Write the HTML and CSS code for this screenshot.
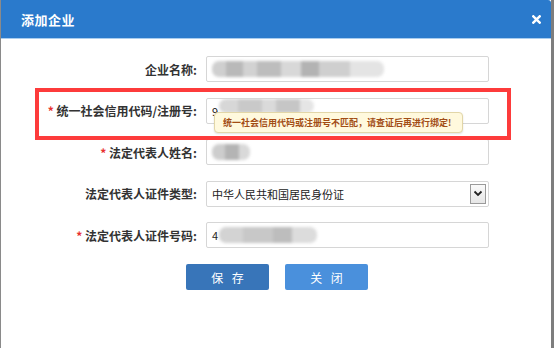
FILE: index.html
```html
<!DOCTYPE html>
<html lang="zh-CN">
<head>
<meta charset="utf-8">
<title>添加企业</title>
<link rel="stylesheet" href="styles.css">
</head>
<body>
<div class="dialog">
  <div class="header">
    <span class="title">添加企业</span>
    <svg class="close" width="9" height="9" viewBox="0 0 9 9"><path d="M1.3 1.3 L7.7 7.7 M7.7 1.3 L1.3 7.7" stroke="#fff" stroke-width="2.4" stroke-linecap="square"/></svg>
  </div>
  <div class="body">
    <div class="form">
      <label class="label">企业名称:</label>
      <div class="field"><span class="blur b1"></span></div>

      <label class="label"><span class="req">*</span> 统一社会信用代码/注册号:</label>
      <div class="field"><span class="val">9</span><span class="blur b2"></span></div>

      <label class="label"><span class="req">*</span> 法定代表人姓名:</label>
      <div class="field"><span class="blur b3"></span></div>

      <label class="label">法定代表人证件类型:</label>
      <div class="field select"><span class="val">中华人民共和国居民身份证</span>
        <span class="arrow"><svg width="10" height="7" viewBox="0 0 10 7"><path d="M1.5 1.5 L5 5 L8.5 1.5" fill="none" stroke="#222" stroke-width="1.8"/></svg></span>
      </div>

      <label class="label"><span class="req">*</span> 法定代表人证件号码:</label>
      <div class="field"><span class="val">4</span><span class="blur b5"></span></div>
    </div>
    <div class="actions">
      <button class="btn save">保 存</button>
      <button class="btn cancel">关 闭</button>
    </div>
  </div>
  <div class="highlight"></div>
  <div class="tip">统一社会信用代码或注册号不匹配，请查证后再进行绑定!</div>
</div>
</body>
</html>
```
FILE: styles.css
```css
* { box-sizing: border-box; }
html, body { margin: 0; padding: 0; background: #fff; }
body {
  width: 554px;
  height: 348px;
  overflow: hidden;
  font-family: "Noto Sans CJK SC", "Liberation Sans", sans-serif;
}
.dialog {
  position: relative;
  width: 554px;
  height: 348px;
  border-left: 1px solid #8a8a8a;
  border-right: 3px solid #7e7e7e;
  background: #fff;
}
.header {
  height: 39px;
  background: #2a7acc;
  border-bottom: 1px solid #a9cdef;
  border-top-right-radius: 3px;
  display: flex;
  align-items: center;
  justify-content: space-between;
  padding: 0 10px 0 20px;
  color: #fff;
}
.title {
  font-size: 13px;
  font-weight: bold;
  letter-spacing: 0.5px;
}
.close {
  display: block;
  margin-top: 1px;
}
.body {
  padding-top: 17px;
}
.form {
  display: grid;
  grid-template-columns: 196px 283px;
  column-gap: 9px;
  row-gap: 15.5px;
}
.label {
  font-size: 12px;
  font-weight: bold;
  color: #333;
  text-align: right;
  align-self: center;
  white-space: nowrap;
}
.req { color: #e8312f; font-weight: bold; }
.field {
  height: 26px;
  border: 1px solid #d6d6d6;
  border-radius: 2px;
  display: flex;
  align-items: center;
  padding-left: 5px;
  font-size: 11px;
  color: #222;
  overflow: hidden;
}
.val { white-space: nowrap; }
.blur {
  display: block;
  height: 16px;
  border-radius: 7px;
  filter: blur(1.5px);
}
.b1 {
  width: 172px;
  background: linear-gradient(90deg, #cfcfcf 0 8%, #b9b9b9 8% 18%, #d2d2d2 18% 26%, #bdbdbd 26% 40%, #d8d8d8 40% 52%, #b3b3b3 52% 62%, #cfcfcf 62% 80%, #e4e4e4 80% 100%);
}
.b2 {
  width: 95px;
  margin-left: 1px;
  height: 14px;
  margin-top: -9px;
  background: linear-gradient(90deg, #d7d7d7 0 20%, #c9c9c9 20% 45%, #dadada 45% 60%, #c6c6c6 60% 85%, #e5e5e5 85% 100%);
}
.b3 {
  width: 38px;
  background: linear-gradient(90deg, #cdcdcd 0 35%, #b4b4b4 35% 70%, #d9d9d9 70% 100%);
}
.b5 {
  width: 98px;
  margin-left: 1px;
  background: linear-gradient(90deg, #d3d3d3 0 25%, #c8c8c8 25% 55%, #bdbdbd 55% 75%, #dcdcdc 75% 100%);
}
.select {
  justify-content: space-between;
  padding-right: 2px;
}
.arrow {
  width: 16px;
  height: 20px;
  border: 1px solid #9a9a9a;
  background: linear-gradient(#fafafa, #e6e6e6);
  display: flex;
  align-items: center;
  justify-content: center;
}
.actions {
  display: flex;
  justify-content: center;
  gap: 16px;
  margin-top: 16px;
  padding-left: 2px;
}
.btn {
  width: 83px;
  height: 26px;
  border: none;
  border-radius: 2px;
  color: #fff;
  font-family: "Noto Sans CJK SC", sans-serif;
  font-size: 12px;
  letter-spacing: 3px;
  padding: 0 0 0 3px;
}
.save { background: #3875b9; }
.cancel { background: #4a90dc; }
.highlight {
  position: absolute;
  left: 34px;
  top: 88px;
  width: 476px;
  height: 52px;
  border: 4px solid #fd3b3b;
}
.tip {
  position: absolute;
  left: 213px;
  top: 112px;
  width: 249px;
  height: 21px;
  background: #fff9dd;
  border: 1px solid #e2d6a8;
  border-radius: 4px;
  box-shadow: 0 1px 2px rgba(0,0,0,0.12);
  color: #a24d16;
  font-size: 9px;
  font-weight: bold;
  line-height: 19px;
  padding-left: 8px;
  white-space: nowrap;
}
```
